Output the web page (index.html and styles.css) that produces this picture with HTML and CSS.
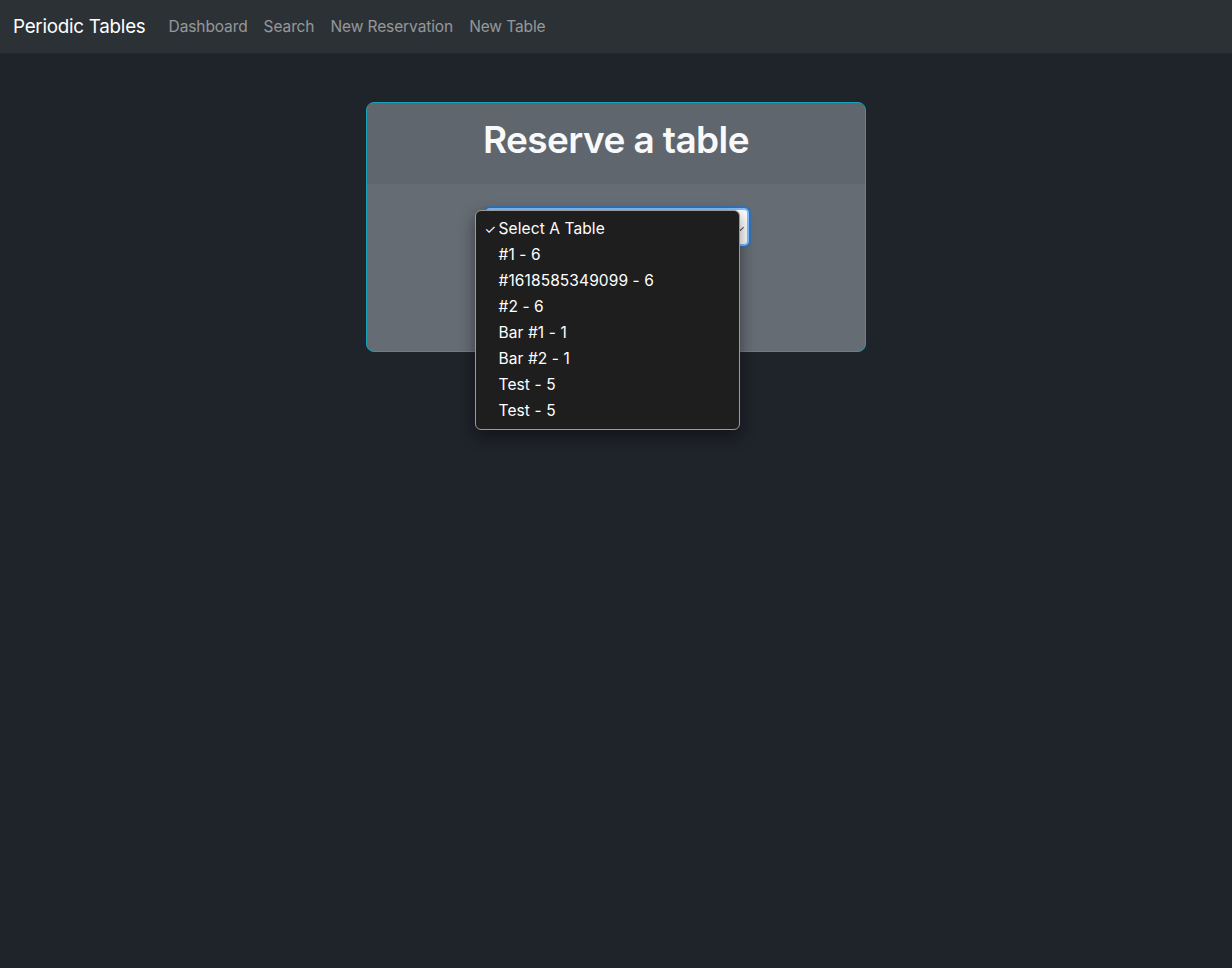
FILE: index.html
```html
<!DOCTYPE html>
<html>
<head>
<meta charset="utf-8">
<link rel="stylesheet" href="styles.css">
</head>
<body>
<nav class="navbar">
  <span class="brand">Periodic Tables</span>
  <a class="nav-link">Dashboard</a>
  <a class="nav-link">Search</a>
  <a class="nav-link">New Reservation</a>
  <a class="nav-link">New Table</a>
</nav>
<main class="main">
  <div class="card">
    <div class="card-header"><h1 class="title">Reserve a table</h1></div>
    <div class="card-body">
      <div class="select-wrap">
        <div class="select"><span class="chev"></span></div>
        <div class="menu">
          <div class="opt"><span class="check">✓</span>Select A Table</div>
          <div class="opt">#1 - 6</div>
          <div class="opt">#1618585349099 - 6</div>
          <div class="opt">#2 - 6</div>
          <div class="opt">Bar #1 - 1</div>
          <div class="opt">Bar #2 - 1</div>
          <div class="opt">Test - 5</div>
          <div class="opt">Test - 5</div>
        </div>
      </div>
    </div>
  </div>
</main>
</body>
</html>
```
FILE: styles.css
```css
* { box-sizing: border-box; }
html, body { margin: 0; height: 100%; }
body {
  background: #1f232a;
  font-family: Inter, "Liberation Sans", sans-serif;
  color: #fff;
}
.navbar {
  height: 54px;
  background: #2c3135;
  display: flex;
  align-items: center;
  padding: 0 13px;
  border-bottom: 1px solid #23272d;
}
.brand {
  font-size: 18.8px;
  color: #fff;
  margin-right: 23px;
  letter-spacing: -0.25px;
}
.nav-link {
  font-size: 15.5px;
  color: rgba(255,255,255,0.5);
  margin-right: 16px;
  letter-spacing: -0.1px;
}
.main {
  display: flex;
  justify-content: center;
  padding-top: 48px;
}
.card {
  width: 500px;
  height: 250px;
  border: 1px solid #17a2b8;
  border-radius: 8px;
  background: #656c73;
  position: relative;
}
.card-header {
  height: 81px;
  background: #5f666d;
  border-bottom: 1px solid #56696f;
  border-radius: 7px 7px 0 0;
  display: flex;
  justify-content: center;
  align-items: center;
}
.title {
  margin: 0;
  font-size: 37px;
  font-weight: 600;
  color: #f8f9fa;
  letter-spacing: -0.6px;
  padding-bottom: 8px;
}
.card-body {
  display: flex;
  justify-content: center;
  padding-top: 24px;
}
.select-wrap {
  position: relative;
  width: 264px;
  margin-left: 1px;
}
.select {
  height: 38px;
  background: #fff;
  border: 2px solid #80bdff;
  border-radius: 5px;
  box-shadow: 0 0 0 2px rgba(0,123,255,0.45);
  position: relative;
}
.chev {
  position: absolute;
  right: 4px;
  top: 15px;
  width: 5px;
  height: 5px;
  border-right: 1px solid #555;
  border-bottom: 1px solid #555;
  transform: rotate(45deg);
}
.menu {
  position: absolute;
  left: -10px;
  top: 2px;
  width: 265px;
  background: #1e1e1e;
  border: 1px solid #9a9a9a;
  border-radius: 6px;
  padding: 5px 0 5px;
  box-shadow: 0 6px 16px rgba(0,0,0,0.45);
}
.opt {
  height: 26px;
  line-height: 26px;
  padding-left: 23px;
  font-size: 15.5px;
  color: #fff;
  position: relative;
  letter-spacing: 0.1px;
}
.check {
  position: absolute;
  left: 9px;
  font-size: 13px;
}
```
